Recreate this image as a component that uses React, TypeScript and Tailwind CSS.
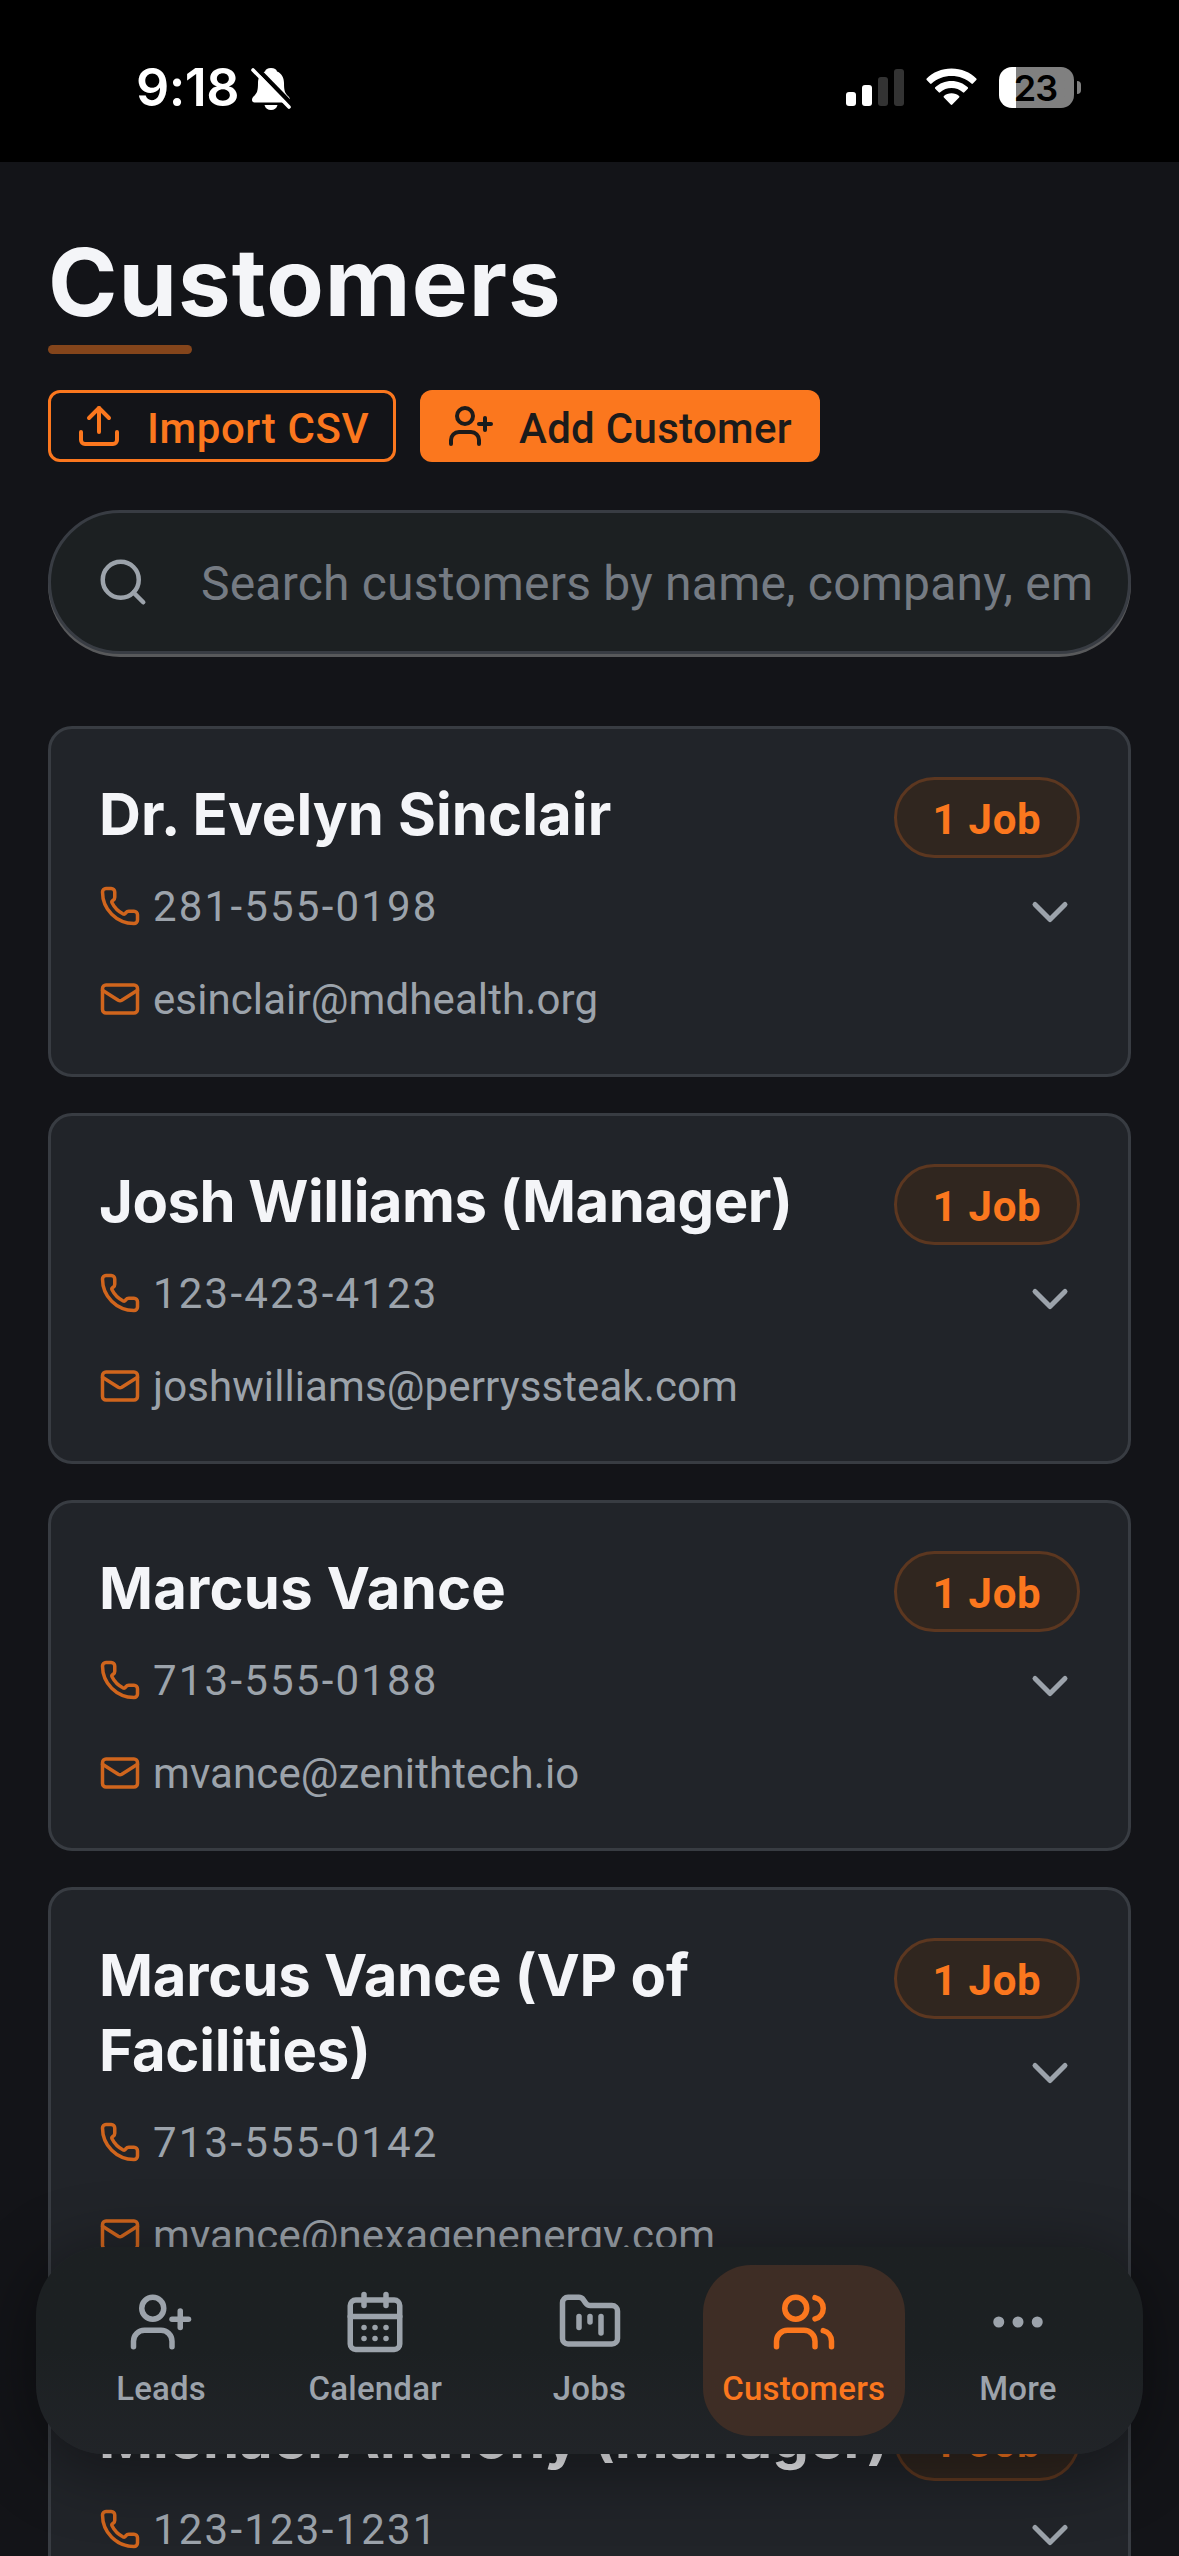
import {
  CalendarDays,
  ChevronDown,
  Ellipsis,
  FolderKanban,
  Mail,
  Phone,
  Search,
  Upload,
  UserPlus,
  Users,
  type LucideIcon,
} from "lucide-react";
import clsx from "clsx";

type Customer = {
  name: string;
  phone: string;
  email?: string;
  jobs: number;
  tracking: string;
};

const customers: Customer[] = [
  {
    name: "Dr. Evelyn Sinclair",
    phone: "281-555-0198",
    email: "esinclair@mdhealth.org",
    jobs: 1,
    tracking: "tracking-[0.1px]",
  },
  {
    name: "Josh Williams (Manager)",
    phone: "123-423-4123",
    email: "joshwilliams@perryssteak.com",
    jobs: 1,
    tracking: "tracking-[-0.5px]",
  },
  {
    name: "Marcus Vance",
    phone: "713-555-0188",
    email: "mvance@zenithtech.io",
    jobs: 1,
    tracking: "tracking-[0.2px]",
  },
  {
    name: "Marcus Vance (VP of Facilities)",
    phone: "713-555-0142",
    email: "mvance@nexagenenergy.com",
    jobs: 1,
    tracking: "tracking-[-0.2px]",
  },
  {
    name: "Michael Anthony (Manager)",
    phone: "123-123-1231",
    jobs: 1,
    tracking: "whitespace-nowrap",
  },
];

const tabs: { label: string; icon: LucideIcon; active?: boolean }[] = [
  { label: "Leads", icon: UserPlus },
  { label: "Calendar", icon: CalendarDays },
  { label: "Jobs", icon: FolderKanban },
  { label: "Customers", icon: Users, active: true },
  { label: "More", icon: Ellipsis },
];

function BellOff() {
  return (
    <svg width="41" height="44" viewBox="0 0 41 44" fill="none">
      <path
        d="M20 1c-3.500 0-5.500 1.500-6 3.500C9 6.500 7 11 7 16c0 8-1 10-4 13-1.500 1.500-2 2.500-2 4S2 35.500 3.500 35.500h33c1.500 0 2.500-1 2.500-2.500s-.5-2.500-2-4c-3-3-4-5-4-13 0-5-2-9.500-7-11.500C25.500 2.500 23.500 1 20 1Z"
        fill="white"
      />
      <path d="M13.500 38h13c-.8 3.400-3.300 5-6.500 5s-5.700-1.600-6.500-5Z" fill="white" />
      {/* the cut runs along the upper side of the slash only */}
      <path d="M4.500 0 43 39.500" stroke="black" strokeWidth="4.500" />
      <path d="M0 1 7 8v5L0 6Z" fill="black" />
      <path d="M2 3 38 40" stroke="white" strokeWidth="3.600" strokeLinecap="round" />
    </svg>
  );
}

function Wifi() {
  return (
    <svg width="51" height="38" viewBox="0 0 51 38" fill="white">
      <path d="M25.500 0.500C35.500 0.500 44 4.300 50.300 10.500c.5.500.5 1 0 1.500l-3.400 3.500c-.5.500-1 .5-1.500 0C40 10.500 33 7.900 25.500 7.900S11 10.500 5.600 15.500c-.5.500-1 .5-1.500 0L.7 12c-.5-.5-.5-1 0-1.500C7 4.300 15.500.500 25.500.500Z" />
      <path d="M25.500 13c6.300 0 12 2.300 16.300 6.300.5.500.5 1 0 1.500l-3.500 3.500c-.5.500-1 .5-1.500 0-3-2.700-7-4.200-11.300-4.200s-8.300 1.500-11.300 4.200c-.5.500-1 .5-1.500 0l-3.500-3.500c-.5-.5-.5-1 0-1.500C13.500 15.300 19.200 13 25.500 13Z" />
      <path d="M25.500 25.300c3 0 5.600 1 7.600 2.700.5.500.5 1 0 1.500l-6.800 7c-.5.500-1.100.5-1.600 0l-6.800-7c-.5-.5-.5-1 0-1.500 2-1.700 4.600-2.700 7.600-2.700Z" />
    </svg>
  );
}

function StatusBar() {
  return (
    <header className="flex h-[162px] items-start justify-between bg-black pl-[136px] pr-[98px] pt-[67px] font-['Inter',sans-serif] font-semibold">
      <div className="flex gap-[13px]">
        <span className="h-[42px] w-[102px] text-[52px] leading-[42px] tracking-[-0.5px] text-white">
          9:18
        </span>
        <BellOff />
      </div>
      <div className="flex">
        <div className="mr-[22px] flex h-[39px] items-end gap-1.5">
          <i className="h-[14px] w-2.5 rounded-[3px] bg-white" />
          <i className="h-[21px] w-2.5 rounded-[3px] bg-white" />
          <i className="h-[29px] w-2.5 rounded-[3px] bg-[#333]" />
          <i className="h-[37px] w-2.5 rounded-[3px] bg-[#333]" />
        </div>
        <div className="mr-[22px] pt-px">
          <Wifi />
        </div>
        <div className="flex h-[41px] w-[75px] items-center justify-center rounded-[13px] bg-linear-to-r from-white from-[17px] to-[#808080] to-[17px] pr-0.5 text-[36px] leading-none tracking-[-1px] text-black">
          23
        </div>
        <i className="ml-[3px] mt-[14px] h-[13px] w-1 rounded-r-full bg-[#808080]" />
      </div>
    </header>
  );
}

function CustomerCard({ name, phone, email, jobs, tracking }: Customer) {
  return (
    <article className="flex justify-between rounded-3xl border-3 border-[#383c42] bg-[#212429] p-12">
      <div className="min-w-0 flex-1">
        <h2
          className={clsx(
            "font-['Inter',sans-serif] text-[58px] font-bold leading-[75px] text-[#f4f5f8]",
            tracking
          )}
        >
          {name}
        </h2>
        <div className="mt-[27px] flex flex-col gap-[39px] text-[42px] leading-[54px] text-[#9ca3ab]">
          <p className="flex h-[54px] items-center gap-3">
            <Phone size={42} className="text-[#d0651d]" />
            <span className="pt-px tracking-[2.2px]">{phone}</span>
          </p>
          {email && (
            <p className="flex h-[54px] items-center gap-3">
              <Mail size={42} className="text-[#d0651d]" />
              <span className="pt-px tracking-[0.1px]">{email}</span>
            </p>
          )}
        </div>
      </div>
      <div className="flex shrink-0 flex-col items-end gap-6">
        <span className="flex h-[81px] w-[186px] items-center justify-center rounded-full border-3 border-[#5c3720] bg-[#30261f] pt-[5px] text-[42px] font-bold leading-none tracking-[0.7px] text-[#fb771e]">
          {jobs} Job
        </span>
        <ChevronDown size={60} className="text-[#9ca3ab]" />
      </div>
    </article>
  );
}

function TabBar() {
  return (
    <nav className="absolute bottom-[102px] left-9 right-9 flex h-[207px] gap-3 rounded-[69px] bg-linear-to-b from-[#1c2022] from-50% to-[#212428] px-6 py-[18px] shadow-[0_12px_72px_rgba(0,0,0,0.45)]">
      {tabs.map(({ label, icon: Icon, active }) => (
        <a
          key={label}
          className={clsx(
            "flex flex-1 flex-col items-center gap-2.5 rounded-[48px] pt-6 text-[33px] font-medium leading-[48px]",
            active ? "bg-[#3e2d25] text-[#fb771e]" : "text-[#9ca3ab]"
          )}
        >
          <Icon size={66} />
          <span className="tracking-[0.2px]">{label}</span>
        </a>
      ))}
    </nav>
  );
}

export default function App() {
  return (
    <div className="relative h-[2556px] w-[1179px] overflow-hidden bg-[#131418] font-['Roboto',sans-serif]">
      <StatusBar />
      <main className="px-12 pt-[66px]">
        <h1 className="font-['Inter',sans-serif] text-[94px] font-bold leading-[108px] tracking-[1px] text-[#f4f5f8]">
          Customers
        </h1>
        <div className="mt-[9px] h-[9px] w-36 rounded-full bg-[#84451b]" />

        <div className="mt-9 flex gap-6 text-[42px] font-medium leading-none">
          <button className="flex h-[72px] w-[348px] items-center gap-6 rounded-xl border-3 border-[#fb771e] pl-6 text-[#fb771e]">
            <Upload size={48} />
            <span className="pt-[5px] tracking-[0.6px]">Import CSV</span>
          </button>
          <button className="flex h-[72px] w-[400px] items-center gap-6 rounded-xl bg-[#fb771e] pl-[27px] text-[#1b1b1b]">
            <UserPlus size={48} />
            <span className="pt-[5px] tracking-[0.3px]">Add Customer</span>
          </button>
        </div>

        <label className="mt-12 flex h-36 items-center gap-[51px] rounded-full border-3 border-[#383c43] bg-[#1c2022] pl-[45px] text-[48px] text-[#757b83] shadow-[0_3px_0_#58595b]">
          <Search size={54} className="text-[#9ca3ab]" />
          <span className="whitespace-nowrap pt-[3px] tracking-[0.2px]">
            Search customers by name, company, em
          </span>
        </label>

        <section className="mt-[72px] flex flex-col gap-9">
          {customers.map((customer) => (
            <CustomerCard key={customer.name} {...customer} />
          ))}
        </section>
      </main>
      <TabBar />
    </div>
  );
}
